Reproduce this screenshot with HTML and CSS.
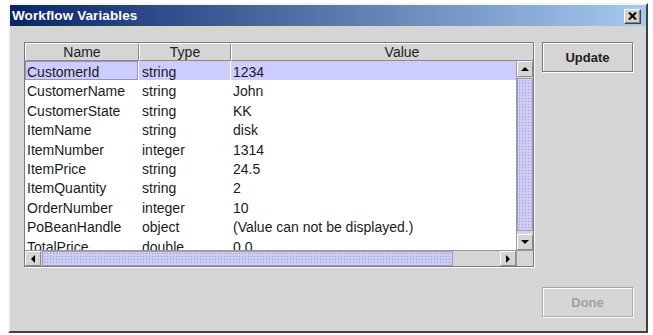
FILE: index.html
```html
<!DOCTYPE html>
<html lang="en">
<head>
  <meta charset="UTF-8">
  <title>Workflow Variables</title>
  <link rel="stylesheet" href="styles.css">
</head>
<body>
  <div class="window">
    <!-- Title bar -->
    <div class="titlebar">
      <span class="title">Workflow Variables</span>
      <button class="close" aria-label="Close">
        <svg width="9" height="8" viewBox="0 0 9 8">
          <path d="M1 0.5 L8 7.5 M8 0.5 L1 7.5" stroke="#000" stroke-width="2" fill="none"/>
        </svg>
      </button>
    </div>

    <div class="content">
      <!-- Table in scroll pane -->
      <div class="scrollpane">
        <div class="header-view">
          <div class="header-row">
            <div class="th col-name">Name</div>
            <div class="th col-type">Type</div>
            <div class="th col-value">Value</div>
          </div>
        </div>
        <div class="corner-top"></div>

        <div class="viewport">
          <div class="rows">
            <div class="row selected">
              <div class="td col-name focus">CustomerId</div>
              <div class="td col-type">string</div>
              <div class="td col-value">1234</div>
            </div>
            <div class="row">
              <div class="td col-name">CustomerName</div>
              <div class="td col-type">string</div>
              <div class="td col-value">John</div>
            </div>
            <div class="row">
              <div class="td col-name">CustomerState</div>
              <div class="td col-type">string</div>
              <div class="td col-value">KK</div>
            </div>
            <div class="row">
              <div class="td col-name">ItemName</div>
              <div class="td col-type">string</div>
              <div class="td col-value">disk</div>
            </div>
            <div class="row">
              <div class="td col-name">ItemNumber</div>
              <div class="td col-type">integer</div>
              <div class="td col-value">1314</div>
            </div>
            <div class="row">
              <div class="td col-name">ItemPrice</div>
              <div class="td col-type">string</div>
              <div class="td col-value">24.5</div>
            </div>
            <div class="row">
              <div class="td col-name">ItemQuantity</div>
              <div class="td col-type">string</div>
              <div class="td col-value">2</div>
            </div>
            <div class="row">
              <div class="td col-name">OrderNumber</div>
              <div class="td col-type">integer</div>
              <div class="td col-value">10</div>
            </div>
            <div class="row">
              <div class="td col-name">PoBeanHandle</div>
              <div class="td col-type">object</div>
              <div class="td col-value">(Value can not be displayed.)</div>
            </div>
            <div class="row">
              <div class="td col-name">TotalPrice</div>
              <div class="td col-type">double</div>
              <div class="td col-value">0.0</div>
            </div>
          </div>
        </div>

        <!-- Vertical scrollbar -->
        <div class="vscroll">
          <div class="arrow-btn"><span class="tri tri-up"></span></div>
          <div class="vtrack">
            <div class="vthumb"></div>
          </div>
          <div class="arrow-btn"><span class="tri tri-down"></span></div>
        </div>

        <!-- Horizontal scrollbar -->
        <div class="hscroll">
          <div class="arrow-btn"><span class="tri tri-left"></span></div>
          <div class="htrack">
            <div class="hthumb"></div>
          </div>
          <div class="arrow-btn"><span class="tri tri-right"></span></div>
        </div>
        <div class="corner"></div>
      </div>

      <!-- Buttons -->
      <div class="buttons">
        <button class="btn">Update</button>
        <button class="btn" disabled>Done</button>
      </div>
    </div>
  </div>
</body>
</html>
```

FILE: styles.css
```css
body {
  margin: 0;
  background: #ffffff;
  font-family: "Liberation Sans", Arial, sans-serif;
}

.window {
  margin: 3px 0 0 8px;
  width: 640px;
  height: 330px;
  box-sizing: border-box;
  background: #d5d5d5;
  border-top: 2px solid #f4f4f4;
  border-left: 2px solid #f4f4f4;
  border-right: 2px solid #404040;
  border-bottom: 2px solid #404040;
  display: flex;
  flex-direction: column;
}

.titlebar {
  height: 21px;
  flex: none;
  background: linear-gradient(to right, #0a246a, #a6caf0);
  display: flex;
  align-items: center;
  justify-content: space-between;
  padding: 0 5px 0 2px;
}

.title {
  color: #ffffff;
  font-weight: bold;
  font-size: 13.5px;
  letter-spacing: 0.1px;
}

.close {
  width: 17px;
  height: 15px;
  padding: 0;
  margin-top: 1px;
  background: #d4d0c8;
  border: 1px solid;
  border-color: #ffffff #404040 #404040 #ffffff;
  box-shadow: inset -1px -1px #808080;
  display: flex;
  align-items: center;
  justify-content: center;
}

.content {
  flex: 1;
  display: flex;
  gap: 8px;
  padding: 16px 13px 14px 14px;
}

/* Scroll pane */
.scrollpane {
  align-self: flex-start;
  display: grid;
  grid-template-columns: 491px 17px;
  grid-template-rows: 18px 189px 16px;
  border: 1px solid #7a7a7a;
  box-shadow: 1px 1px #ffffff;
  background: #d5d5d5;
}

.header-view {
  overflow: hidden;
}

.header-row,
.row {
  display: flex;
  width: 548px;
}

.col-name { width: 114px; }
.col-type { width: 92px; }
.col-value { width: 342px; }

.th {
  box-sizing: border-box;
  height: 18px;
  line-height: 16px;
  font-size: 14px;
  color: #222;
  text-align: center;
  border-top: 1px solid #ffffff;
  border-left: 1px solid #ffffff;
  border-right: 1px solid #8a8a8a;
  border-bottom: 1px solid #8a8a8a;
  flex: none;
}

.corner-top {
  border-top: 1px solid #ffffff;
  border-bottom: 1px solid #8a8a8a;
}

.viewport {
  overflow: hidden;
  background: #ffffff;
}

.row {
  height: 19.4px;
}

.td {
  box-sizing: border-box;
  flex: none;
  height: 19.4px;
  line-height: 22px;
  font-size: 14px;
  color: #1a1a1a;
  padding-left: 2px;
  white-space: nowrap;
  border-right: 1px solid #ffffff;
}

.td.col-type {
  padding-left: 3px;
}

.row.selected .td {
  background: #ccccff;
}

.td.focus {
  box-shadow: inset 0 0 0 1px #9494c4;
}

/* Scrollbars */
.vscroll {
  display: flex;
  flex-direction: column;
  border-left: 1px solid #9a9a9a;
}

.hscroll {
  display: flex;
  border-top: 1px solid #9a9a9a;
}

.arrow-btn {
  flex: none;
  width: 16px;
  height: 16px;
  box-sizing: border-box;
  background: #d5d5d5;
  border-top: 1px solid #ffffff;
  border-left: 1px solid #ffffff;
  border-right: 1px solid #8a8a8a;
  border-bottom: 1px solid #8a8a8a;
  display: flex;
  align-items: center;
  justify-content: center;
}

.hscroll .arrow-btn {
  height: 15px;
}

.vtrack {
  flex: 1;
  padding: 1px 0 3px 0;
}

.htrack {
  flex: 1;
  padding: 0 47px 0 1px;
}

.vthumb,
.hthumb {
  box-sizing: border-box;
  height: 100%;
  background-color: #c8c8f4;
  background-image:
    radial-gradient(circle, #a4a4d8 0.7px, transparent 1px),
    radial-gradient(circle, #e4e4fc 0.7px, transparent 1px);
  background-size: 3px 3px, 3px 3px;
  background-position: 0 0, 1.5px 1.5px;
  border: 1px solid #9a9acc;
}

.tri {
  width: 0;
  height: 0;
  border: 4px solid transparent;
}

.tri-up {
  border-top: none;
  border-bottom: 4px solid #000;
}

.tri-down {
  border-bottom: none;
  border-top: 4px solid #000;
}

.tri-left {
  border-left: none;
  border-right: 4px solid #000;
}

.tri-right {
  border-right: none;
  border-left: 4px solid #000;
}

.corner {
  background: #d5d5d5;
  border-top: 1px solid #9a9a9a;
  border-left: 1px solid #9a9a9a;
}

/* Buttons */
.buttons {
  display: flex;
  flex-direction: column;
  justify-content: space-between;
}

.btn {
  width: 91px;
  height: 30px;
  background: #d5d5d5;
  border: 1px solid #7a7a7a;
  box-shadow: inset 1px 1px #ffffff, 1px 1px #ffffff;
  font-family: "Liberation Sans", Arial, sans-serif;
  font-weight: bold;
  font-size: 13px;
  color: #222;
  padding: 0;
}

.btn:disabled {
  color: #a0a0a0;
  border-color: #a8a8a8;
}
```
